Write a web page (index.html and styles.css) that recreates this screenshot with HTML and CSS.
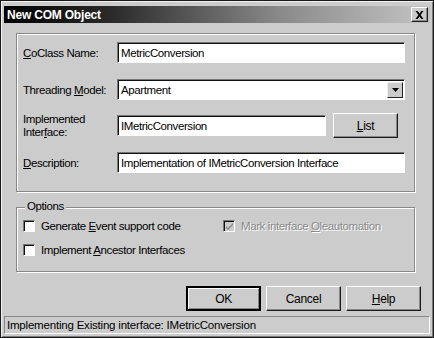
FILE: index.html
```html
<!DOCTYPE html>
<html lang="en">
<head>
    <meta charset="UTF-8">
    <title>New COM Object</title>
    <link rel="stylesheet" href="styles.css">
</head>
<body>
    <div class="window">
        <div class="titlebar">
            <span class="title">New COM Object</span>
            <span class="close-btn">
                <svg width="9" height="8" viewBox="0 0 9 8"><path d="M0.5 0h2.2l1.8 2.6L6.3 0h2.2L5.6 4l2.9 4H6.3L4.5 5.4 2.7 8H0.5l2.9-4z" fill="#000"/></svg>
            </span>
        </div>

        <div class="dialog">
            <div class="group main-group">
                <div class="field-row">
                    <label class="field-label"><u>C</u>oClass Name:</label>
                    <div class="textbox">MetricConversion</div>
                </div>
                <div class="field-row">
                    <label class="field-label">Threading <u>M</u>odel:</label>
                    <div class="textbox combo">
                        <span>Apartment</span>
                        <span class="combo-btn">
                            <svg width="7" height="4" viewBox="0 0 7 4"><path d="M0 0h7L3.5 4z" fill="#000"/></svg>
                        </span>
                    </div>
                </div>
                <div class="field-row row-tight">
                    <label class="field-label two-line">Implemented<br>Inter<u>f</u>ace:</label>
                    <div class="with-button">
                        <div class="textbox">IMetricConversion</div>
                        <button class="btn list-btn"><u>L</u>ist</button>
                    </div>
                </div>
                <div class="field-row">
                    <label class="field-label"><u>D</u>escription:</label>
                    <div class="textbox">Implementation of IMetricConversion Interface</div>
                </div>
            </div>

            <div class="group options-group">
                <span class="legend">Options</span>
                <div class="options-grid">
                    <div class="check-item">
                        <span class="checkbox"></span>
                        <span>Generate <u>E</u>vent support code</span>
                    </div>
                    <div class="check-item disabled">
                        <span class="checkbox checked">
                            <svg width="9" height="9" viewBox="0 0 9 9"><path d="M1 4l2 2 5-5v2L3 8 1 6z" fill="#888"/></svg>
                        </span>
                        <span class="etched">Mark interface <u>O</u>leautomation</span>
                    </div>
                    <div class="check-item">
                        <span class="checkbox"></span>
                        <span>Implement <u>A</u>ncestor Interfaces</span>
                    </div>
                </div>
            </div>

            <div class="button-row">
                <button class="btn default-btn">OK</button>
                <button class="btn">Cancel</button>
                <button class="btn"><u>H</u>elp</button>
            </div>
        </div>

        <div class="statusbar">Implementing Existing interface: IMetricConversion</div>
    </div>
</body>
</html>
```

FILE: styles.css
```css
* {
    margin: 0;
    padding: 0;
    box-sizing: border-box;
}

body {
    background: #cccccc;
    font-family: "Liberation Sans", Arial, sans-serif;
    font-size: 11.5px;
    letter-spacing: -0.4px;
    color: #000;
}

u {
    text-decoration: underline;
    text-underline-offset: 1px;
}

.window {
    width: 434px;
    height: 338px;
    background: #cccccc;
    border: 1px solid #1a1a1a;
    box-shadow: inset 1px 1px 0 #f0f0f0, inset -1px -1px 0 #7a7a7a;
    padding: 5px 3px 3px 3px;
    display: flex;
    flex-direction: column;
}

.titlebar {
    height: 17px;
    background: linear-gradient(to right, #000 0%, #2a2a2a 25%, #8a8a8a 65%, #c4c4c4 100%);
    display: flex;
    align-items: center;
    justify-content: space-between;
    padding: 0 2px 0 3px;
}

.title {
    color: #fff;
    font-weight: bold;
    font-size: 12px;
    letter-spacing: -0.2px;
}

.close-btn {
    width: 17px;
    height: 15px;
    background: #cccccc;
    border: 1px solid;
    border-color: #fff #222 #222 #fff;
    box-shadow: inset -1px -1px 0 #888;
    display: flex;
    align-items: center;
    justify-content: center;
}

.dialog {
    flex: 1;
    padding: 10px 15px 0 12px;
    display: flex;
    flex-direction: column;
}

.group {
    border: 1px solid #888;
    box-shadow: 1px 1px 0 #fff, inset 1px 1px 0 #fff;
}

.main-group {
    height: 159px;
    padding: 8px 9px 0 6px;
    display: flex;
    flex-direction: column;
    gap: 16px;
}

.field-row {
    display: flex;
    align-items: center;
    height: 21px;
    flex-shrink: 0;
}

.row-tight {
    margin-top: -1px;
}

.field-label {
    width: 94px;
    flex-shrink: 0;
    line-height: 16px;
}

.two-line {
    line-height: 13px;
}

.field-row > .textbox,
.with-button {
    flex: 1;
}

.textbox {
    height: 21px;
    background: #fff;
    border: 1px solid;
    border-color: #777 #fff #fff #777;
    box-shadow: inset 1px 1px 0 #111;
    padding: 0 3px;
    display: flex;
    align-items: center;
    white-space: nowrap;
    overflow: hidden;
}

.combo {
    justify-content: space-between;
    padding-right: 1px;
}

.combo-btn {
    width: 16px;
    height: 16px;
    background: #cccccc;
    border: 1px solid;
    border-color: #eee #222 #222 #eee;
    display: flex;
    align-items: center;
    justify-content: center;
}

.with-button {
    display: flex;
    align-items: center;
    gap: 7px;
}

.with-button .textbox {
    width: 209px;
}

.btn {
    font-family: "Liberation Sans", Arial, sans-serif;
    font-size: 12px;
    letter-spacing: -0.3px;
    background: #cccccc;
    border: 1px solid;
    border-color: #fff #1a1a1a #1a1a1a #fff;
    box-shadow: inset -1px -1px 0 #888;
    color: #000;
}

.list-btn {
    width: 65px;
    height: 25px;
}

.options-group {
    position: relative;
    margin-top: 15px;
    height: 65px;
    padding: 12px 6px 0 6px;
}

.legend {
    position: absolute;
    top: -8px;
    left: 8px;
    padding: 0 2px;
    background: #cccccc;
}

.options-grid {
    display: grid;
    grid-template-columns: 200px 1fr;
    row-gap: 12px;
}

.check-item {
    display: flex;
    align-items: center;
    gap: 6px;
    height: 12px;
}

.checkbox {
    width: 12px;
    height: 12px;
    background: #fff;
    border: 1px solid;
    border-color: #777 #fff #fff #777;
    box-shadow: inset 1px 1px 0 #111;
    display: flex;
    align-items: center;
    justify-content: center;
}

.checkbox.checked {
    background: #cccccc;
}

.etched {
    color: #8a8a8a;
    text-shadow: 1px 1px 0 #fff;
}

.button-row {
    display: flex;
    justify-content: flex-end;
    gap: 5px;
    margin-top: 14px;
    margin-right: -6px;
}

.button-row .btn {
    width: 75px;
    height: 25px;
}

.default-btn {
    border: 2px solid #000;
    box-shadow: inset 1px 1px 0 #fff, inset -1px -1px 0 #888;
}

.statusbar {
    height: 18px;
    margin-top: 5px;
    border: 1px solid;
    border-color: #888 #fff #fff #888;
    padding: 0 2px;
    display: flex;
    align-items: center;
    white-space: nowrap;
    font-size: 11.5px;
    letter-spacing: -0.2px;
}
```
